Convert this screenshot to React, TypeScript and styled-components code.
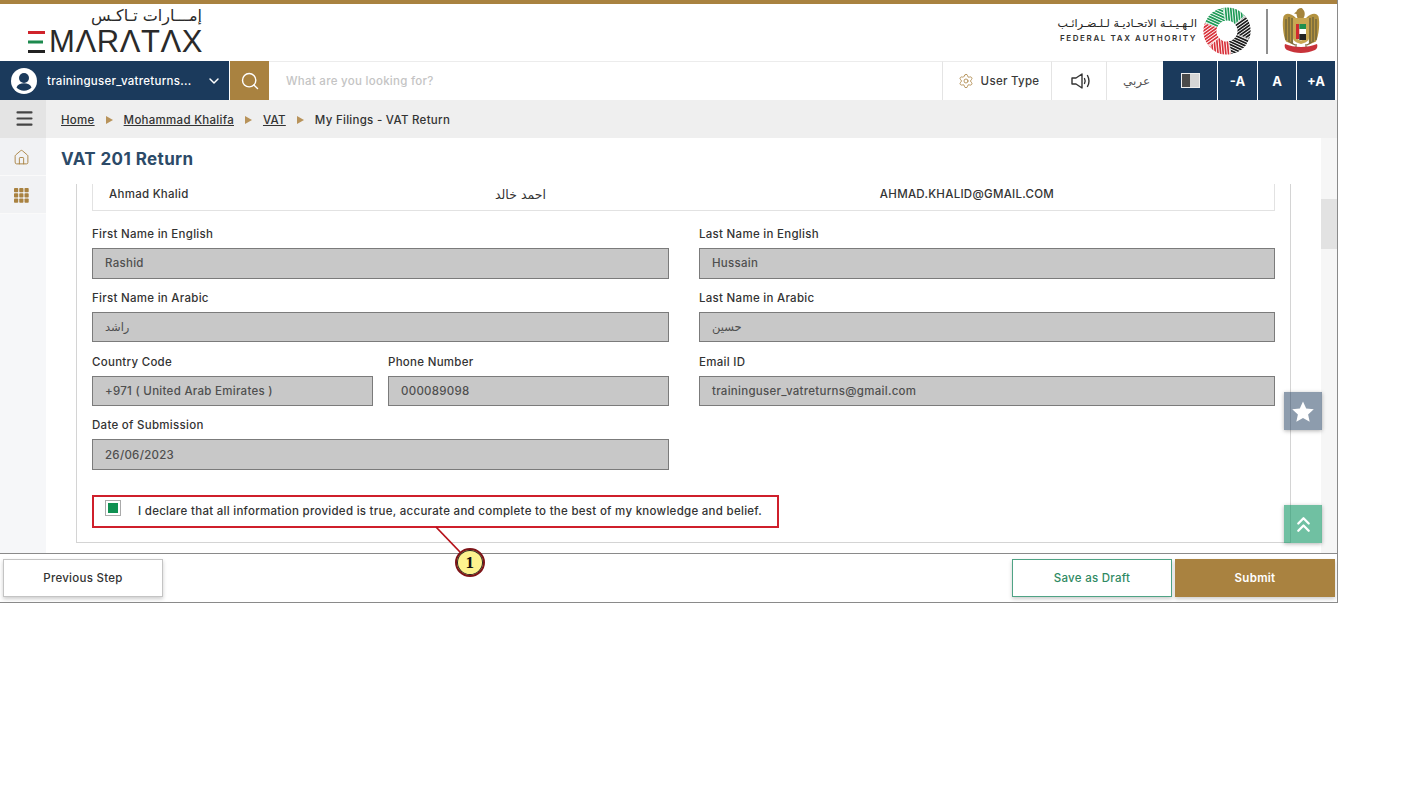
import React from "react";
import styled, { createGlobalStyle } from "styled-components";
import { ChevronDown, ChevronsUp, Home, Menu, Search, Settings } from "lucide-react";

const NAVY = "#1b3a5c";
const GOLD = "#a98240";
const FONT = `Inter, "DejaVu Sans", sans-serif`;

const GlobalStyle = createGlobalStyle`
  html, body { margin: 0; padding: 0; background: #fff; }
  * { box-sizing: border-box; }
  body { font-family: ${FONT}; color: #33373b; letter-spacing: 0.28px; }
`;

const Frame = styled.div`
  position: relative;
  width: 1338px;
  height: 603px;
  display: flex;
  flex-direction: column;
  border-right: 1px solid #8a8a8a;
  border-bottom: 1px solid #8a8a8a;
  overflow: hidden;
`;

const GoldBar = styled.div`
  height: 4px;
  flex: none;
  background: ${GOLD};
`;

const Header = styled.header`
  height: 57px;
  flex: none;
  display: flex;
  justify-content: space-between;
  align-items: center;
  padding: 0 17px 3px 28px;
`;

const BrandLogo = styled.div`
  width: 174px;
  display: flex;
  flex-direction: column;
  align-items: flex-end;
`;

const BrandArabic = styled.div`
  font-family: "DejaVu Sans", sans-serif;
  font-size: 16px;
  line-height: 20px;
  height: 20px;
  margin-top: -2px;
  letter-spacing: 0;
  color: #2b2b2b;
  direction: rtl;
`;

const BrandWord = styled.div`
  display: flex;
  align-items: center;
  gap: 1px;
  height: 24px;
  width: 100%;
  margin-top: 4px;
`;

const BrandLetters = styled.span`
  font-family: "Liberation Sans", sans-serif;
  font-size: 31px;
  line-height: 24px;
  letter-spacing: 0.6px;
  color: #2a2a2a;
  white-space: nowrap;
`;

const Authority = styled.div`
  display: flex;
  align-items: center;
`;

const AuthorityText = styled.div`
  display: flex;
  flex-direction: column;
  align-items: flex-end;
  margin-right: 6px;
`;

const AuthorityArabic = styled.div`
  font-family: "DejaVu Sans", sans-serif;
  font-size: 11px;
  line-height: 14px;
  letter-spacing: 0;
  margin-top: -1px;
  color: #222;
  direction: rtl;
  white-space: nowrap;
`;

const AuthorityEnglish = styled.div`
  font-size: 8px;
  line-height: 12px;
  font-weight: 600;
  letter-spacing: 1.6px;
  margin-top: 1px;
  color: #333;
  white-space: nowrap;
`;

const LogoDivider = styled.div`
  width: 2px;
  height: 45px;
  margin: 0 14px 0 15px;
  background: #8f8f8f;
`;

const Toolbar = styled.div`
  height: 39px;
  flex: none;
  display: flex;
  align-items: stretch;
  padding-right: 2px;
  background: #fff;
`;

const UserBlock = styled.div`
  width: 229px;
  flex: none;
  display: flex;
  align-items: center;
  padding: 0 7px 0 11px;
  background: ${NAVY};
  color: #fff;
`;

const UserName = styled.span`
  flex: 1;
  margin-left: 10px;
  font-size: 11.5px;
  font-weight: 500;
  white-space: nowrap;
`;

const SearchButton = styled.div`
  width: 39px;
  margin-left: 1px;
  flex: none;
  display: flex;
  align-items: center;
  justify-content: center;
  background: ${GOLD};
  color: #fff;
`;

const SearchHint = styled.div`
  flex: 1;
  display: flex;
  align-items: center;
  padding-left: 17px;
  border-top: 1px solid #ececec;
  font-size: 11.5px;
  font-weight: 500;
  color: #c4c4c4;
`;

const ToolCell = styled.div<{ $width: number }>`
  width: ${(p) => p.$width}px;
  flex: none;
  display: flex;
  align-items: center;
  justify-content: center;
  gap: 7px;
  padding-left: 3px;
  border-left: 1px solid #e4e4e4;
  border-top: 1px solid #ececec;
  font-size: 11.5px;
  font-weight: 500;
  color: #3a3a3a;
`;

const ArabicLabel = styled.span`
  font-family: "DejaVu Sans", sans-serif;
  font-weight: 400;
  font-size: 12px;
  letter-spacing: 0;
  color: #555;
`;

const NavyCell = styled.div<{ $width: number }>`
  width: ${(p) => p.$width}px;
  flex: none;
  margin-right: 1px;
  display: flex;
  align-items: center;
  justify-content: center;
  background: ${NAVY};
  color: #fff;
  font-size: 13px;
  font-weight: 700;
  letter-spacing: 0;
  &:last-child { margin-right: 0; }
`;

const Contrast = styled.div`
  width: 19px;
  height: 15px;
  background: linear-gradient(90deg, #4a4a4a 0 50%, #d5d5d5 50% 100%);
  border: 1px solid #eee;
`;

const Body = styled.div`
  flex: 1;
  min-height: 0;
  display: flex;
`;

const Side = styled.aside`
  width: 46px;
  flex: none;
  display: flex;
  flex-direction: column;
  background: #f6f7f9;
`;

const MenuCell = styled.div`
  height: 38px;
  display: flex;
  align-items: center;
  justify-content: center;
  padding: 0 0 2px 3px;
  background: #e4e4e4;
  color: #444;
`;

const SideCell = styled.div`
  height: 38px;
  display: flex;
  align-items: center;
  justify-content: center;
  padding: 2px 4px 0 0;
  background: #f1f2f4;
  border-bottom: 1px solid #fafafa;
  color: ${GOLD};
`;

const Main = styled.main`
  flex: 1;
  min-width: 0;
  display: flex;
  flex-direction: column;
`;

const Breadcrumb = styled.nav`
  height: 38px;
  flex: none;
  display: flex;
  align-items: center;
  padding: 2px 0 0 15px;
  background: #efefef;
  font-size: 11.5px;
  font-weight: 500;
  color: #333;
`;

const CrumbLink = styled.a`
  color: #333;
  text-decoration: underline;
`;

const CrumbArrow = styled.i`
  width: 0;
  height: 0;
  margin: 0 11px;
  border-left: 7px solid #b8935a;
  border-top: 4px solid transparent;
  border-bottom: 4px solid transparent;
`;

const Page = styled.div`
  flex: 1;
  min-height: 0;
  display: flex;
`;

const Content = styled.div`
  flex: 1;
  min-width: 0;
  display: flex;
  flex-direction: column;
  background: #fff;
`;

const Title = styled.h1`
  height: 46px;
  flex: none;
  margin: 0;
  padding: 11px 0 0 15px;
  font-size: 17px;
  line-height: 20px;
  font-weight: 700;
  letter-spacing: 0.4px;
  color: #2c4a68;
`;

const Scrollbar = styled.div`
  width: 16px;
  flex: none;
  padding-top: 61px;
  background: #f6f6f6;
`;

const Thumb = styled.div`
  height: 50px;
  background: #e2e2e2;
`;

const Card = styled.section`
  height: 359px;
  margin: 0 30px;
  padding: 0 15px;
  border: 1px solid #d4d4d4;
  border-top: none;
`;

const NameRow = styled.div`
  height: 27px;
  display: grid;
  grid-template-columns: 310px 341px 1fr;
  align-items: center;
  padding: 0 0 6px 16px;
  border: 1px solid #e2e2e2;
  border-top: none;
  font-size: 11.5px;
  font-weight: 500;
  color: #333;
`;

const ArabicValue = styled.span`
  font-family: "DejaVu Sans", sans-serif;
  font-size: 12.5px;
  letter-spacing: 0;
  direction: rtl;
  justify-self: start;
  margin-left: 76px;
`;

const EmailValue = styled.span`
  justify-self: center;
  margin-right: 100px;
`;

const FormGrid = styled.div`
  display: grid;
  grid-template-columns: 577px 576px;
  column-gap: 30px;
  row-gap: 11.3px;
  margin-top: 15px;
`;

const PhoneGroup = styled.div`
  display: grid;
  grid-template-columns: 281px 281px;
  column-gap: 15px;
`;

const Field = styled.div`
  display: flex;
  flex-direction: column;
`;

const Label = styled.label`
  height: 15px;
  margin-bottom: 7px;
  font-size: 11.5px;
  line-height: 17px;
  font-weight: 500;
  color: #333;
`;

const ReadOnlyInput = styled.div<{ $arabic?: boolean }>`
  height: 30.5px;
  display: flex;
  align-items: center;
  padding-left: 12px;
  background: #c8c8c8;
  border: 1px solid #7b7b7b;
  font-family: ${(p) => (p.$arabic ? `"DejaVu Sans", sans-serif` : FONT)};
  font-size: 11.5px;
  font-weight: 500;
  letter-spacing: ${(p) => (p.$arabic ? 0 : 0.28)}px;
  color: #4f4f4f;
`;

const Declaration = styled.div`
  width: 687px;
  height: 33px;
  margin-top: 25px;
  display: flex;
  align-items: center;
  padding-left: 11px;
  border: 2.5px solid #cf1f2b;
  font-size: 11.5px;
  font-weight: 500;
  color: #333;
  white-space: nowrap;
`;

const CheckBox = styled.span`
  width: 16px;
  height: 16px;
  flex: none;
  margin: -6px 17px 0 0;
  display: flex;
  align-items: center;
  justify-content: center;
  border: 1px solid #aaa;
  background: #fff;
`;

const CheckFill = styled.span`
  width: 10px;
  height: 10px;
  background: #0f9152;
`;

const Footer = styled.footer`
  height: 49px;
  flex: none;
  display: flex;
  align-items: center;
  justify-content: space-between;
  padding: 0 2px 1px 3px;
  border-top: 1px solid #8a8a8a;
`;

const FooterGroup = styled.div`
  display: flex;
  gap: 3px;
`;

const FooterButton = styled.button<{ $kind: "plain" | "outline" | "solid" }>`
  width: 160px;
  height: 38px;
  padding: 0;
  font-family: ${FONT};
  font-size: 11.5px;
  font-weight: ${(p) => (p.$kind === "solid" ? 600 : 500)};
  letter-spacing: 0.28px;
  box-shadow: 0 2px 4px rgba(0, 0, 0, 0.2);
  border: 1px solid ${(p) => (p.$kind === "plain" ? "#c4c4c4" : p.$kind === "outline" ? "#4fa385" : GOLD)};
  background: ${(p) => (p.$kind === "solid" ? GOLD : "#fff")};
  color: ${(p) => (p.$kind === "plain" ? "#333" : p.$kind === "outline" ? "#2f8a63" : "#fff")};
`;

const FloatButton = styled.div<{ $top: number; $color: string }>`
  position: absolute;
  top: ${(p) => p.$top}px;
  left: 1284px;
  width: 38px;
  height: 38px;
  display: flex;
  align-items: center;
  justify-content: center;
  background: ${(p) => p.$color};
  box-shadow: 0 1px 4px rgba(0, 0, 0, 0.3);
  color: #fff;
`;

const Callout = styled.svg`
  position: absolute;
  left: 430px;
  top: 524px;
  overflow: visible;
`;

const CalloutNumber = styled.div`
  position: absolute;
  left: 455px;
  top: 548px;
  width: 30px;
  height: 29px;
  display: flex;
  align-items: center;
  justify-content: center;
  border-radius: 50%;
  background: #fdf28e;
  border: 2px solid #7d1418;
  box-shadow: inset 0 0 0 1px #222;
  font-family: "Liberation Serif", serif;
  font-size: 17px;
  font-weight: 700;
  color: #111;
`;

const FlagE = () => (
  <svg width="20" height="22" viewBox="0 0 20 22" style={{ flex: "none" }}>
    <rect x="0" y="0" width="17" height="3" fill="#d0232b" />
    <rect x="0" y="9.500" width="15" height="3" fill="#1c8a4e" />
    <rect x="0" y="19" width="17" height="3" fill="#222" />
  </svg>
);

// six ring sectors, each filled with parallel stripes
const FTA_SECTORS = ["#1f9a57", "#1f9a57", "#1a1a1a", "#1a1a1a", "#d8313a", "#d8313a"];
const FTA_OFFSETS = [-2, 0.6, 3.2, 5.8, 8.4, 11, 13.6, 16.2, 18.8];

const FtaRing = () => {
  const point = (r: number, deg: number) => {
    const a = (deg * Math.PI) / 180;
    return `${(r * Math.cos(a)).toFixed(2)} ${(r * Math.sin(a)).toFixed(2)}`;
  };
  const wedge = `M${point(10.5, -29)} L${point(23.5, -29)} A23.5 23.5 0 0 1 ${point(23.5, 29)} L${point(10.5, 29)} A10.5 10.5 0 0 0 ${point(10.5, -29)} Z`;
  return (
    <svg width="48" height="48" viewBox="-24 -24 48 48">
      <defs>
        <clipPath id="fta-wedge">
          <path d={wedge} />
        </clipPath>
      </defs>
      {FTA_SECTORS.map((color, i) => (
        <g key={i} transform={`rotate(${i * 60 - 130})`}>
          <g clipPath="url(#fta-wedge)">
            {FTA_OFFSETS.map((c) => (
              <line
                key={c}
                x1={c * 0.423 - 36}
                y1={c * 0.906 + 17}
                x2={c * 0.423 + 36}
                y2={c * 0.906 - 17}
                stroke={color}
                strokeWidth="1.700"
              />
            ))}
          </g>
        </g>
      ))}
    </svg>
  );
};

const Emblem = () => (
  <svg width="38" height="46" viewBox="0 0 38 46">
    <path d="M19 0c-2 0-4 1.500-4.500 3.500L12 5.500l2.500.5c.2 1.500.6 3 1 4h6c1.500-2 2-6-.5-8.500C20.500.500 19.800 0 19 0z" fill="#a5843c" />
    <path d="M14 10C8 4 3 5 1.500 8.500c-1.500 6-.5 19 2.500 25l7 3 1-24z" fill="#b3923f" />
    <path d="M24 10c6-6 11-5 12.500-1.500 1.500 6 .5 19-2.500 25l-7 3-1-24z" fill="#b3923f" />
    <path d="M4 11v21M7 9v25M10 10v25M28 10v25M31 9v25M34 11v21" stroke="#55523a" strokeWidth="1" />
    <path d="M11 10h16v20c0 3-4 5-8 6-4-1-8-3-8-6z" fill="#c9a752" />
    <path d="M14 16h10v12c0 2-2 3.500-5 4.500-3-1-5-2.500-5-4.500z" fill="#fff" />
    <rect x="14" y="16" width="3.300" height="15" fill="#cf2a2f" />
    <rect x="17.300" y="16" width="6.700" height="5" fill="#1f8f4e" />
    <rect x="17.300" y="26" width="6.700" height="6" fill="#222" />
    <path d="M3 36c5 2 10 3 16 3s11-1 16-3c1 2 0 5-2 6-9 4-19 4-28 0-2-1-3-4-2-6z" fill="#c8333a" />
    <path d="M8 34l5 3M30 34l-5 3M14 36v3M24 36v3" stroke="#7b6a3c" strokeWidth="1.200" />
  </svg>
);

const Avatar = () => (
  <svg width="26" height="26" viewBox="0 0 26 26">
    <circle cx="13" cy="13" r="13" fill="#fff" />
    <circle cx="13" cy="10" r="5" fill={NAVY} />
    <path d="M5.500 19.500c1-3 4-4.300 7.500-4.300s6.500 1.300 7.500 4.300c-1.500 2-4.500 3.200-7.500 3.200s-6-1.200-7.500-3.200z" fill={NAVY} />
  </svg>
);

const GridIcon = () => (
  <svg width="15" height="15" viewBox="0 0 15 15" fill={GOLD}>
    {[0, 5.25, 10.5].map((y) =>
      [0, 5.25, 10.5].map((x) => <rect key={`${x}-${y}`} x={x} y={y} width="4.200" height="4.200" rx="0.8" />),
    )}
  </svg>
);

const SpeakerIcon = () => (
  <svg width="20" height="16" viewBox="0 0 20 16" fill="none" stroke="#333" strokeWidth="1.400" strokeLinejoin="round" strokeLinecap="round">
    <path d="M1 5h4l6-4v14l-6-4H1z" />
    <path d="M13.500 5.500c.8 1.500.8 3.500 0 5" />
    <path d="M16.500 2.500c1.800 3.300 1.800 7.700 0 11" />
  </svg>
);

const StarIcon = () => (
  <svg width="22" height="21" viewBox="0 0 24 23" fill="#fff">
    <polygon points="12,0.500 15.500,8.200 23.800,9.100 17.600,14.700 19.300,22.800 12,18.700 4.700,22.800 6.400,14.700 0.200,9.100 8.500,8.200" />
  </svg>
);

const App = () => {
  return (
    <>
      <GlobalStyle />
      <Frame>
        <GoldBar />
        <Header>
          <BrandLogo>
            <BrandArabic>إمـــارات تـاكـس</BrandArabic>
            <BrandWord aria-label="EMARATAX">
              <FlagE />
              <BrandLetters>MΛRΛTΛX</BrandLetters>
            </BrandWord>
          </BrandLogo>
          <Authority>
            <AuthorityText>
              <AuthorityArabic>الـهـيـئـة الاتحـاديـة لـلـضـرائـب</AuthorityArabic>
              <AuthorityEnglish>FEDERAL TAX AUTHORITY</AuthorityEnglish>
            </AuthorityText>
            <FtaRing />
            <LogoDivider />
            <Emblem />
          </Authority>
        </Header>

        <Toolbar>
          <UserBlock>
            <Avatar />
            <UserName>traininguser_vatreturns...</UserName>
            <ChevronDown size={16} strokeWidth={2.2} />
          </UserBlock>
          <SearchButton>
            <Search size={20} strokeWidth={1.7} />
          </SearchButton>
          <SearchHint>What are you looking for?</SearchHint>
          <ToolCell $width={109}>
            <Settings size={16} strokeWidth={1.2} color={GOLD} />
            User Type
          </ToolCell>
          <ToolCell $width={55}>
            <SpeakerIcon />
          </ToolCell>
          <ToolCell $width={57}>
            <ArabicLabel>عربي</ArabicLabel>
          </ToolCell>
          <NavyCell $width={54}>
            <Contrast />
          </NavyCell>
          <NavyCell $width={39}>-A</NavyCell>
          <NavyCell $width={38}>A</NavyCell>
          <NavyCell $width={38}>+A</NavyCell>
        </Toolbar>

        <Body>
          <Side>
            <MenuCell>
              <Menu size={21} strokeWidth={2.4} />
            </MenuCell>
            <SideCell>
              <Home size={17} strokeWidth={1.3} />
            </SideCell>
            <SideCell>
              <GridIcon />
            </SideCell>
          </Side>
          <Main>
            <Breadcrumb>
              <CrumbLink>Home</CrumbLink>
              <CrumbArrow />
              <CrumbLink>Mohammad Khalifa</CrumbLink>
              <CrumbArrow />
              <CrumbLink>VAT</CrumbLink>
              <CrumbArrow />
              <span>My Filings - VAT Return</span>
            </Breadcrumb>
            <Page>
              <Content>
                <Title>VAT 201 Return</Title>
                <Card>
                  <NameRow>
                    <span>Ahmad Khalid</span>
                    <ArabicValue>احمد خالد</ArabicValue>
                    <EmailValue>AHMAD.KHALID@GMAIL.COM</EmailValue>
                  </NameRow>
                  <FormGrid>
                    <Field>
                      <Label>First Name in English</Label>
                      <ReadOnlyInput>Rashid</ReadOnlyInput>
                    </Field>
                    <Field>
                      <Label>Last Name in English</Label>
                      <ReadOnlyInput>Hussain</ReadOnlyInput>
                    </Field>
                    <Field>
                      <Label>First Name in Arabic</Label>
                      <ReadOnlyInput $arabic>راشد</ReadOnlyInput>
                    </Field>
                    <Field>
                      <Label>Last Name in Arabic</Label>
                      <ReadOnlyInput $arabic>حسين</ReadOnlyInput>
                    </Field>
                    <PhoneGroup>
                      <Field>
                        <Label>Country Code</Label>
                        <ReadOnlyInput>+971 ( United Arab Emirates )</ReadOnlyInput>
                      </Field>
                      <Field>
                        <Label>Phone Number</Label>
                        <ReadOnlyInput>000089098</ReadOnlyInput>
                      </Field>
                    </PhoneGroup>
                    <Field>
                      <Label>Email ID</Label>
                      <ReadOnlyInput>traininguser_vatreturns@gmail.com</ReadOnlyInput>
                    </Field>
                    <Field>
                      <Label>Date of Submission</Label>
                      <ReadOnlyInput>26/06/2023</ReadOnlyInput>
                    </Field>
                  </FormGrid>
                  <Declaration>
                    <CheckBox>
                      <CheckFill />
                    </CheckBox>
                    I declare that all information provided is true, accurate and complete to the best of my knowledge and belief.
                  </Declaration>
                </Card>
              </Content>
              <Scrollbar>
                <Thumb />
              </Scrollbar>
            </Page>
          </Main>
        </Body>

        <Footer>
          <FooterButton $kind="plain">Previous Step</FooterButton>
          <FooterGroup>
            <FooterButton $kind="outline">Save as Draft</FooterButton>
            <FooterButton $kind="solid">Submit</FooterButton>
          </FooterGroup>
        </Footer>

        <FloatButton $top={392} $color="rgba(27, 58, 92, 0.5)">
          <StarIcon />
        </FloatButton>
        <FloatButton $top={505} $color="rgba(17, 150, 100, 0.6)">
          <ChevronsUp size={25} strokeWidth={2.2} />
        </FloatButton>
        <Callout width="40" height="40">
          <line x1="6" y1="3" x2="30" y2="28" stroke="#b5121b" strokeWidth="1.800" />
        </Callout>
        <CalloutNumber>1</CalloutNumber>
      </Frame>
    </>
  );
};

export default App;
